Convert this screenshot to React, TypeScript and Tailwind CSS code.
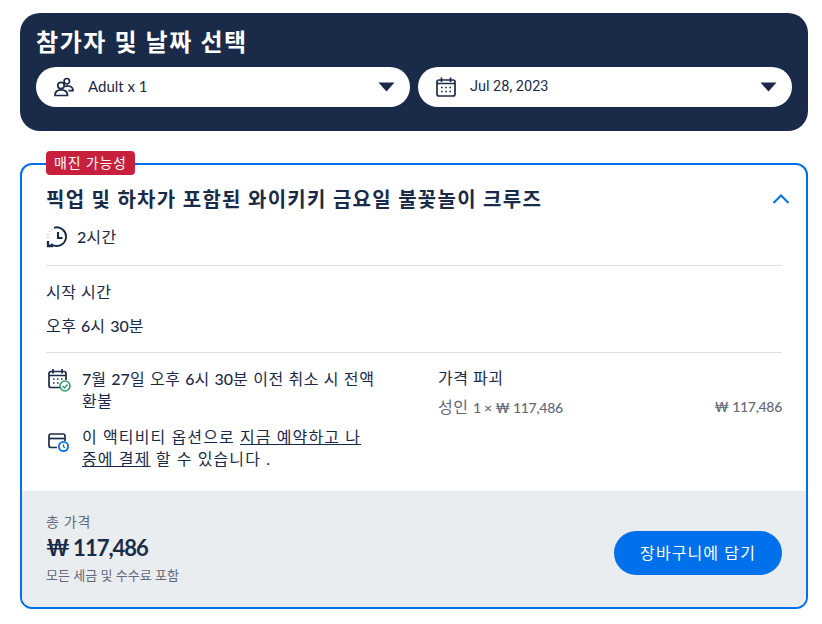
const FONT = "font-['Lato','Noto_Sans_CJK_KR','Noto_Sans',sans-serif]";

function Caret() {
  return (
    <svg width="17" height="10" viewBox="0 0 17 10" className="shrink-0">
      <path d="M0.5 0.5H16.5L8.5 9.5Z" fill="#1a2b49" />
    </svg>
  );
}

function People() {
  return (
    <svg width="20" height="20" viewBox="0 0 20 20" fill="none" stroke="#1a2b49" strokeWidth="1.7" className="shrink-0">
      <circle cx="7" cy="8.5" r="3.2" />
      <circle cx="12.8" cy="4.2" r="2.7" />
      <path d="M1 18.5c0-3.6 2.6-5.6 6.2-5.6s6.3 2 6.3 5.6H1Z" />
      <path d="M11 9.6c1.2-.6 2.4-.8 3.6-.6 2.6.3 4.4 2 4.4 4.6h-4.6" />
    </svg>
  );
}

function Calendar() {
  return (
    <svg width="20" height="20" viewBox="0 0 20 20" fill="none" className="shrink-0">
      <rect x="1" y="3" width="18" height="16" rx="2" stroke="#1a2b49" strokeWidth="1.7" />
      <path d="M5.5 0.5V5M14.5 0.5V5M1 6.5H19" stroke="#1a2b49" strokeWidth="1.7" />
      <path d="M5 10.5h1.6M9.2 10.5h1.6M13.4 10.5h1.6M5 14.5h1.6M9.2 14.5h1.6M13.4 14.5h1.6" stroke="#1a2b49" strokeWidth="1.5" />
    </svg>
  );
}

function HistoryIcon() {
  return (
    <svg width="22" height="22" viewBox="0 0 22 22" fill="none" stroke="#1a2b49" strokeWidth="1.9" className="shrink-0">
      <path d="M8 1.8A9.3 9.3 0 1 1 5 18" />
      <path d="M12 6v6h4.5" strokeWidth="2.1" />
      <path d="M1.6 11.5v.2M2.2 8v.2M3.8 5v.2M6 3v.2" strokeWidth="1.9" />
      <path d="M2 15v5h5" strokeWidth="2.3" />
    </svg>
  );
}

function CalendarCheck() {
  return (
    <svg width="24" height="24" viewBox="0 0 24 24" fill="none" className="ml-px shrink-0">
      <path d="M13 19.5H4a2 2 0 0 1-2-2V5.5a2 2 0 0 1 2-2h13a2 2 0 0 1 2 2V12" stroke="#1a2b49" strokeWidth="1.7" />
      <path d="M6 1v4.5M15 1v4.5M2 7.5h17" stroke="#1a2b49" strokeWidth="1.7" />
      <path d="M6 11h1.5M10 11h1.5M14 11h1.5M6 15h1.5M10 15h1.5" stroke="#1a2b49" strokeWidth="1.4" />
      <circle cx="18" cy="18" r="5" fill="#fff" stroke="#2f9e6e" strokeWidth="1.6" />
      <path d="M15.5 18l2 2 3-3.5" stroke="#2f9e6e" strokeWidth="1.5" />
    </svg>
  );
}

function CardClock() {
  return (
    <svg width="24" height="24" viewBox="0 0 24 24" fill="none" className="ml-px mt-1 shrink-0">
      <path d="M10 17.5H4a2 2 0 0 1-2-2V6a2 2 0 0 1 2-2h12a2 2 0 0 1 2 2v5" stroke="#1a2b49" strokeWidth="1.7" />
      <path d="M2 8.5h16" stroke="#1a2b49" strokeWidth="1.7" />
      <circle cx="16.5" cy="16.5" r="5.5" fill="#0071eb" />
      <circle cx="16.5" cy="16.5" r="3.7" fill="#fff" />
      <path d="M16.5 14.3v2.4l1.6 1" stroke="#0071eb" strokeWidth="1.2" />
    </svg>
  );
}

function Select({ icon, label, cls }: { icon: React.ReactNode; label: string; cls: string }) {
  return (
    <div className="flex h-10 flex-1 items-center rounded-full bg-white pl-[18px] pr-[15px]">
      {icon}
      <span className={`ml-[14px] flex-1 text-[#1a2b49] ${cls}`}>{label}</span>
      <Caret />
    </div>
  );
}

function N({ children }: { children: React.ReactNode }) {
  return <span className="font-medium tracking-normal">{children}</span>;
}

function Money({ children }: { children: React.ReactNode }) {
  return <span className="text-[14px] font-medium tracking-[-0.3px]">{children}</span>;
}

export default function App() {
  return (
    <div className={`${FONT} min-h-[624px] bg-white pl-5 pr-[14px] pt-[13px] text-[#1a2b49]`}>
      <section className="rounded-[20px] bg-[#1a2b49] px-4 pb-6 pt-[13px]">
        <h1 className="text-2xl font-bold leading-8 tracking-[1.6px] text-white">참가자 및 날짜 선택</h1>
        <div className="mt-[9px] flex gap-2">
          <Select icon={<People />} label="Adult x 1" cls="-mt-px text-[15px]" />
          <Select icon={<Calendar />} label="Jul 28, 2023" cls="font-['Roboto',sans-serif] text-[14.5px]" />
        </div>
      </section>

      <section className="relative mt-8 rounded-xl border-2 border-[#0071eb]">
        <span className="absolute -top-[14px] left-6 rounded bg-[#c8203c] px-2 py-0.5 text-sm leading-5 tracking-[0.8px] text-white">매진 가능성</span>
        <div className="px-6 pt-5">
          <div className="-mr-2 flex items-center justify-between">
            <h2 className="text-xl font-bold leading-7 tracking-[1.3px]">픽업 및 하차가 포함된 와이키키 금요일 불꽃놀이 크루즈</h2>
            <svg width="18" height="10" viewBox="0 0 18 10" fill="none" stroke="#0071eb" strokeWidth="2" className="shrink-0">
              <path d="M1.5 9L9 1.5L16.5 9" />
            </svg>
          </div>
          <div className="mt-3 flex h-6 items-center gap-[9px] text-base tracking-[0.5px]">
            <HistoryIcon />
            <span><N>2</N>시간</span>
          </div>
          <hr className="mt-4 border-[#dcdfe4]" />
          <p className="mt-[14px] text-base leading-6 tracking-[0.5px]">시작 시간</p>
          <p className="mt-[10px] text-base leading-6 tracking-[0.5px]">오후 <N>6</N>시 <N>30</N>분</p>
          <hr className="mt-[14px] border-[#dcdfe4]" />
          <div className="mt-[13px] flex">
            <div className="w-[392px] shrink-0 pt-[2px]">
              <div className="flex gap-[11px]">
                <CalendarCheck />
                <p className="w-[294px] text-base leading-[22px] tracking-[0.6px]">
                  <N>7</N>월 <N>27</N>일 오후 <N>6</N>시 <N>30</N>분 이전 취소 시 전액 환불
                </p>
              </div>
              <div className="mt-[14px] flex gap-[11px]">
                <CardClock />
                <p className="w-[294px] text-base leading-[22px] tracking-[1.1px]">
                  이 액티비티 옵션으로 <span className="underline">지금 예약하고 나중에 결제</span> 할 수 있습니다 .
                </p>
              </div>
            </div>
            <div className="flex-1">
              <p className="text-base leading-6 tracking-[0.5px]">가격 파괴</p>
              <div className="mt-[5px] flex justify-between text-base leading-6 tracking-[0.5px] text-[#63687a]">
                <span>성인 <Money>1 × ₩ 117,486</Money></span>
                <Money>₩ 117,486</Money>
              </div>
            </div>
          </div>
        </div>
        <div className="mt-[21px] flex items-center justify-between rounded-b-[10px] bg-[#e9edf0] px-6 pb-6 pt-[23px]">
          <div>
            <p className="text-sm leading-4 tracking-[0.7px] text-[#63687a]">총 가격</p>
            <p className="mt-[2px] text-[22px] font-bold leading-8 tracking-[-1px]">₩ 117,486</p>
            <p className="mt-[3px] text-[13px] leading-4 text-[#63687a]">모든 세금 및 수수료 포함</p>
          </div>
          <button className="mt-2 flex h-11 items-center rounded-full bg-[#0071eb] px-[26px] text-base tracking-[1.1px] text-white">장바구니에 담기</button>
        </div>
      </section>
    </div>
  );
}
